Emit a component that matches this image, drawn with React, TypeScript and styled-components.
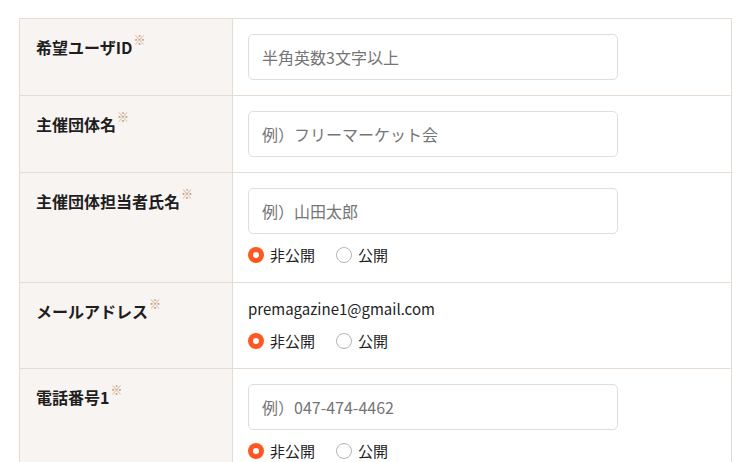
import React from "react";
import styled, { createGlobalStyle } from "styled-components";

const Global = createGlobalStyle`
  html, body { margin: 0; padding: 0; background: #fff; }
  body { font-family: "Noto Sans CJK JP", "Noto Sans", sans-serif; color: #222; }
  * { box-sizing: border-box; }
`;

const Page = styled.div`
  padding: 18px 18px 0 19px;
`;

const Form = styled.div`
  width: 713px;
  border: 1px solid #e6dcd3;
  border-bottom: none;
`;

const Row = styled.div`
  display: grid;
  grid-template-columns: 213px 1fr;
  border-bottom: 1px solid #e6dcd3;
`;

const Label = styled.div`
  background: #f8f4f1;
  border-right: 1px solid #e6dcd3;
  padding: 15px 16px;
  font-size: 16px;
  font-weight: 700;
  line-height: 27px;
  color: #1e1e1e;
`;

const Req = styled.sup`
  font-size: 12px;
  font-weight: 400;
  color: #bf9670;
  vertical-align: top;
  line-height: 14px;
  position: relative;
  top: -1px;
  margin-left: 1px;
`;

const Field = styled.div`
  padding: 15px 15px;
  display: flex;
  flex-direction: column;
  align-items: flex-start;
`;

const Input = styled.input`
  width: 370px;
  height: 46px;
  border: 1px solid #dedede;
  border-radius: 5px;
  padding: 0 13px;
  font-family: "Noto Sans CJK JP", "Noto Sans", sans-serif;
  font-size: 16px;
  color: #333;
  background: #fff;
  outline: none;
  &::placeholder { color: #757575; }
`;

const Text = styled.div`
  font-size: 15px;
  line-height: 22px;
  color: #222;
`;

const Radios = styled.div`
  display: flex;
  gap: 21px;
  margin-top: 10px;
  padding-bottom: 1px;
  height: 23px;
  align-items: center;
`;

const RadioLabel = styled.label`
  display: flex;
  align-items: center;
  gap: 6px;
  font-size: 15px;
  line-height: 22px;
  color: #222;
`;

const Dot = styled.span<{ $on?: boolean }>`
  width: 16px;
  height: 16px;
  border-radius: 50%;
  flex: none;
  ${(p) =>
    p.$on
      ? `background: #ff5722; border: none; position: relative;
         &::after { content: ""; position: absolute; left: 5px; top: 5px; width: 6px; height: 6px; border-radius: 50%; background: #fff; }`
      : `background: #fff; border: 1px solid #b5b5b5;`}
`;

const Privacy = () => (
  <Radios>
    <RadioLabel>
      <Dot $on />
      非公開
    </RadioLabel>
    <RadioLabel>
      <Dot />
      公開
    </RadioLabel>
  </Radios>
);

type RowDef = {
  label: string;
  placeholder?: string;
  text?: string;
  privacy?: boolean;
};

const rows: RowDef[] = [
  { label: "希望ユーザID", placeholder: "半角英数3文字以上" },
  { label: "主催団体名", placeholder: "例）フリーマーケット会" },
  { label: "主催団体担当者氏名", placeholder: "例）山田太郎", privacy: true },
  { label: "メールアドレス", text: "premagazine1@gmail.com", privacy: true },
  { label: "電話番号1", placeholder: "例）047-474-4462", privacy: true },
];

export default function App() {
  return (
    <>
      <Global />
      <Page>
        <Form>
          {rows.map((r) => (
            <Row key={r.label}>
              <Label>
                {r.label}
                <Req>※</Req>
              </Label>
              <Field>
                {r.text ? <Text>{r.text}</Text> : <Input placeholder={r.placeholder} />}
                {r.privacy && <Privacy />}
              </Field>
            </Row>
          ))}
        </Form>
      </Page>
    </>
  );
}
